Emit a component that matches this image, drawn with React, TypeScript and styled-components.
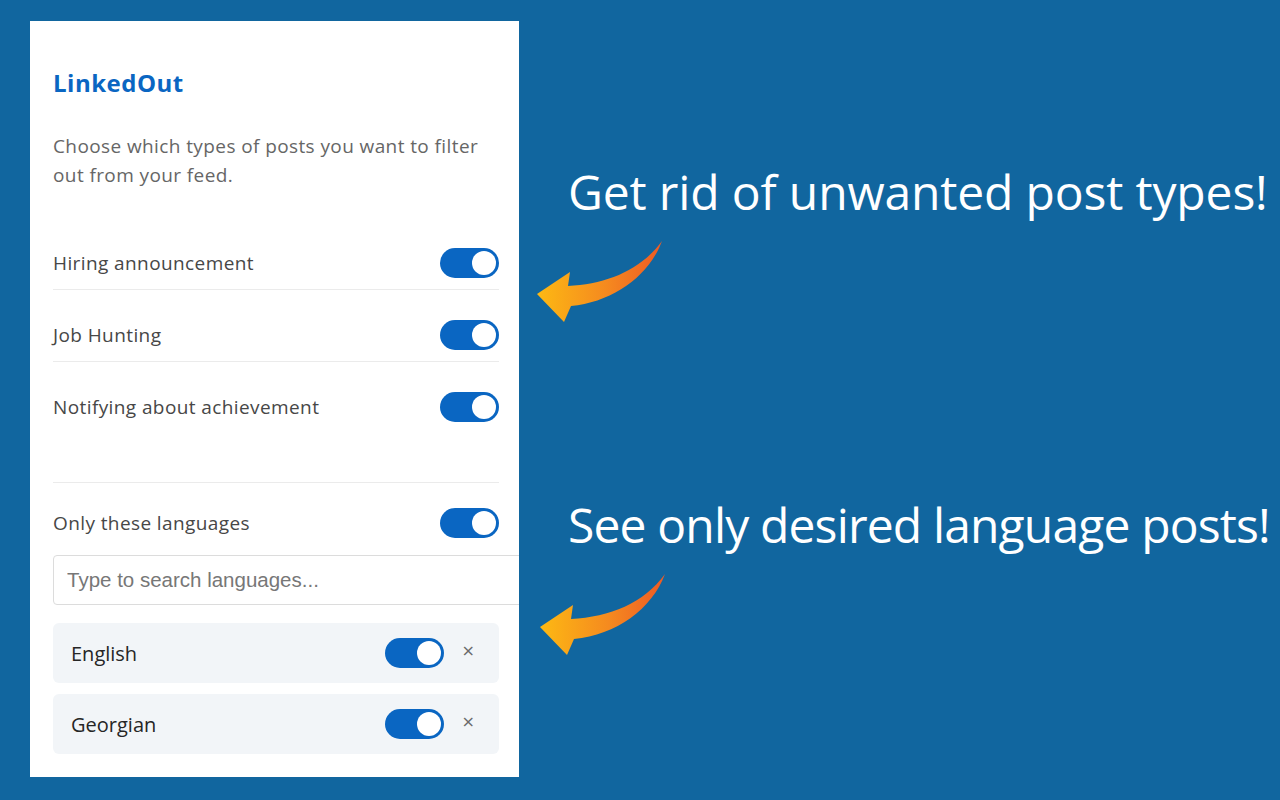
import React from "react";
import styled, { createGlobalStyle } from "styled-components";

const Global = createGlobalStyle`
  html, body { margin: 0; padding: 0; }
  body { background: #11669f; width: 1280px; height: 800px; overflow: hidden; }
`;

const Page = styled.div`
  display: flex;
  width: 1280px;
  height: 800px;
  padding: 21px 0 0 30px;
  box-sizing: border-box;
  background: #11669f;
  overflow: hidden;
`;

const Panel = styled.div`
  flex: none;
  width: 489px;
  height: 756px;
  background: #ffffff;
  box-sizing: border-box;
  padding: 44px 20px 0 23px;
  overflow: hidden;
  font-family: "Open Sans", "Noto Sans", sans-serif;
`;

const Title = styled.h1`
  margin: 0;
  font-size: 24px;
  font-weight: 700;
  color: #0a66c2;
  line-height: 36px;
  letter-spacing: 0.5px;
`;

const Description = styled.p`
  margin: 31px 0 0;
  font-size: 19px;
  line-height: 29px;
  color: #666666;
  letter-spacing: 0.4px;
`;

const Row = styled.div<{ $divider?: boolean; $gapAfter?: number }>`
  display: flex;
  align-items: center;
  justify-content: space-between;
  height: 30px;
  padding-bottom: ${(p) => (p.$divider ? 11 : 0)}px;
  border-bottom: ${(p) => (p.$divider ? "1px solid #ebebeb" : "none")};
  margin-bottom: ${(p) => p.$gapAfter ?? 0}px;
`;

const Rows = styled.div`
  margin-top: 58px;
`;

const Label = styled.span`
  font-size: 19px;
  color: #474747;
  letter-spacing: 0.4px;
`;

const Divider = styled.div`
  height: 1px;
  background: #ebebeb;
  margin: 60px 0 25px;
`;

const Track = styled.span<{ $on: boolean }>`
  position: relative;
  flex: none;
  display: inline-block;
  width: 59px;
  height: 30px;
  border-radius: 15px;
  background: ${(p) => (p.$on ? "#0a66c2" : "#c7c7c7")};
`;

const Knob = styled.span<{ $on: boolean }>`
  position: absolute;
  top: 3px;
  left: ${(p) => (p.$on ? 32 : 3)}px;
  width: 24px;
  height: 24px;
  border-radius: 50%;
  background: #ffffff;
`;

const Toggle = ({ on = true }: { on?: boolean }) => (
  <Track $on={on}>
    <Knob $on={on} />
  </Track>
);

const SearchInput = styled.input`
  display: block;
  width: 520px;
  height: 50px;
  margin-top: 17px;
  box-sizing: border-box;
  border: 1px solid #dcdcdc;
  border-radius: 4px;
  padding: 0 13px;
  font-family: "Liberation Sans", Arial, sans-serif;
  font-size: 20.5px;
  color: #333;
  outline: none;
  &::placeholder { color: #777777; }
`;

const LangList = styled.div`
  display: flex;
  flex-direction: column;
  gap: 11px;
  margin-top: 18px;
`;

const LangCard = styled.div`
  display: flex;
  align-items: center;
  height: 60px;
  padding: 0 24px 0 18px;
  background: #f2f5f8;
  border-radius: 6px;
`;

const LangName = styled.span`
  flex: 1;
  font-size: 20px;
  color: #262626;
`;

const Remove = styled.span`
  margin-left: 18px;
  font-family: "DejaVu Sans", sans-serif;
  font-size: 16px;
  color: #6b6b6b;
  line-height: 1;
  margin-top: -4px;
`;

const Side = styled.div`
  flex: none;
  display: flex;
  flex-direction: column;
  margin-left: 10px;
  padding-top: 140px;
`;

const Callout = styled.div<{ $mt: number }>`
  margin-top: ${(p) => p.$mt}px;
  display: flex;
  flex-direction: column;
`;

const Heading = styled.h2<{ $tracking: number }>`
  margin: 0 0 0 39px;
  font-family: "Open Sans", "Noto Sans", sans-serif;
  font-weight: 400;
  font-size: 48px;
  line-height: 62px;
  color: #ffffff;
  letter-spacing: ${(p) => p.$tracking}px;
  white-space: nowrap;
`;

const ArrowWrap = styled.div<{ $dx: number }>`
  margin-left: ${(p) => p.$dx}px;
  margin-top: 11px;
  width: 140px;
  height: 95px;
`;

const Arrow = ({ id }: { id: string }) => (
  <svg width="140" height="95" viewBox="0 0 140 95">
    <defs>
      <linearGradient id={id} x1="0" y1="0" x2="1" y2="0">
        <stop offset="0" stopColor="#fdb913" />
        <stop offset="0.55" stopColor="#f58a1f" />
        <stop offset="1" stopColor="#ee5a24" />
      </linearGradient>
    </defs>
    <path
      d="M 8 60 L 41 38 L 39 52 C 78 50 112 36 133 7 C 120 42 84 68 42 72 L 35 88 Z"
      fill={`url(#${id})`}
    />
  </svg>
);

const languages = ["English", "Georgian"];

export default function App() {
  return (
    <>
      <Global />
      <Page>
        <Panel>
          <Title>LinkedOut</Title>
          <Description>
            Choose which types of posts you want to filter out from your feed.
          </Description>
          <Rows>
            <Row $divider $gapAfter={30}>
              <Label>Hiring announcement</Label>
              <Toggle />
            </Row>
            <Row $divider $gapAfter={30}>
              <Label>Job Hunting</Label>
              <Toggle />
            </Row>
            <Row>
              <Label>Notifying about achievement</Label>
              <Toggle />
            </Row>
          </Rows>
          <Divider />
          <Row>
            <Label>Only these languages</Label>
            <Toggle />
          </Row>
          <SearchInput placeholder="Type to search languages..." />
          <LangList>
            {languages.map((l) => (
              <LangCard key={l}>
                <LangName>{l}</LangName>
                <Toggle />
                <Remove>×</Remove>
              </LangCard>
            ))}
          </LangList>
        </Panel>
        <Side>
          <Callout $mt={0}>
            <Heading $tracking={-0.15}>Get rid of unwanted post types!</Heading>
            <ArrowWrap $dx={0}>
              <Arrow id="g1" />
            </ArrowWrap>
          </Callout>
          <Callout $mt={165}>
            <Heading $tracking={-0.85}>See only desired language posts!</Heading>
            <ArrowWrap $dx={3}>
              <Arrow id="g2" />
            </ArrowWrap>
          </Callout>
        </Side>
      </Page>
    </>
  );
}
